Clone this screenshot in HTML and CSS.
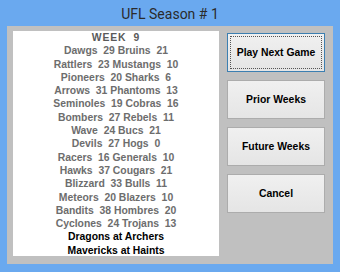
FILE: index.html
```html
<!DOCTYPE html>
<html>
<head>
<meta charset="utf-8">
<link rel="stylesheet" href="styles.css">
</head>
<body>
<div class="window">
  <div class="titlebar">UFL Season # 1</div>
  <div class="client">
    <div class="list">
      <div class="row week">WEEK&nbsp; 9</div>
      <div class="row">Dawgs&nbsp; 29 Bruins&nbsp; 21</div>
      <div class="row">Rattlers&nbsp; 23 Mustangs&nbsp; 10</div>
      <div class="row">Pioneers&nbsp; 20 Sharks&nbsp; 6</div>
      <div class="row">Arrows&nbsp; 31 Phantoms&nbsp; 13</div>
      <div class="row">Seminoles&nbsp; 19 Cobras&nbsp; 16</div>
      <div class="row">Bombers&nbsp; 27 Rebels&nbsp; 11</div>
      <div class="row">Wave&nbsp; 24 Bucs&nbsp; 21</div>
      <div class="row">Devils&nbsp; 27 Hogs&nbsp; 0</div>
      <div class="row">Racers&nbsp; 16 Generals&nbsp; 10</div>
      <div class="row">Hawks&nbsp; 37 Cougars&nbsp; 21</div>
      <div class="row">Blizzard&nbsp; 33 Bulls&nbsp; 11</div>
      <div class="row">Meteors&nbsp; 20 Blazers&nbsp; 10</div>
      <div class="row">Bandits&nbsp; 38 Hombres&nbsp; 20</div>
      <div class="row">Cyclones&nbsp; 24 Trojans&nbsp; 13</div>
      <div class="row upcoming">Dragons at Archers</div>
      <div class="row upcoming">Mavericks at Haints</div>
    </div>
    <div class="buttons">
      <button class="btn focused"><span class="focus-ring">Play Next Game</span></button>
      <button class="btn"><span class="focus-ring">Prior Weeks</span></button>
      <button class="btn"><span class="focus-ring">Future Weeks</span></button>
      <button class="btn"><span class="focus-ring">Cancel</span></button>
    </div>
  </div>
</div>
</body>
</html>
```

FILE: styles.css
```css
html, body {
  margin: 0;
  padding: 0;
}
body {
  background: #6aa9ef;
  width: 340px;
  height: 272px;
  overflow: hidden;
}
.window {
  width: 340px;
  height: 272px;
  background: #6aa9ef;
  display: flex;
  flex-direction: column;
}
.titlebar {
  height: 26px;
  display: flex;
  align-items: center;
  justify-content: center;
  font-family: Roboto, "Noto Sans", sans-serif;
  font-size: 14px;
  color: #2b2b2b;
  padding-top: 1px;
  box-sizing: border-box;
}
.client {
  margin: 0 7px;
  height: 238px;
  background: #c0c0c0;
  display: flex;
  box-sizing: border-box;
  padding: 5px 8px 8px 6px;
  gap: 8px;
}
.list {
  width: 206px;
  height: 225px;
  background: #ffffff;
  font-family: "Liberation Sans", Arial, sans-serif;
  font-weight: bold;
  font-size: 10.4px;
  color: #6d6d6d;
  text-align: center;
  white-space: nowrap;
}
.row {
  height: 13.3px;
  line-height: 13.3px;
}
.week {
  letter-spacing: 0.8px;
  color: #5a5a5a;
}
.upcoming {
  color: #000;
}
.buttons {
  display: flex;
  flex-direction: column;
  gap: 8px;
  padding-top: 2px;
}
.btn {
  width: 98px;
  height: 39px;
  margin: 0;
  padding: 2px;
  border: 1px solid #acacac;
  border-radius: 0;
  background: linear-gradient(#f0f0f0, #e5e5e5);
  font-family: "Liberation Sans", Arial, sans-serif;
  font-weight: bold;
  font-size: 10.4px;
  color: #000;
  display: flex;
  box-sizing: border-box;
}
.focus-ring {
  flex: 1;
  display: flex;
  align-items: center;
  justify-content: center;
  border: 1px dotted transparent;
}
.btn.focused {
  border-color: #3c7fb1;
}
.btn.focused .focus-ring {
  border-color: #555;
}
```
